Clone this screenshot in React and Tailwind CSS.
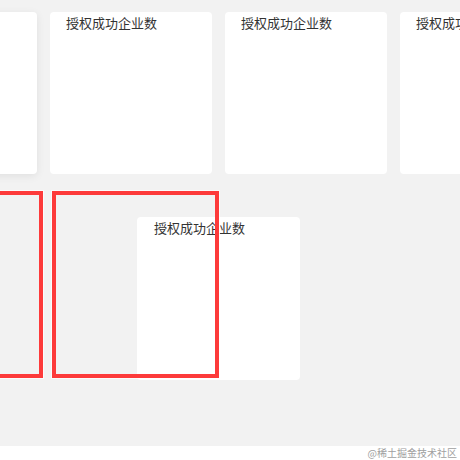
const font = { fontFamily: '"Noto Sans CJK SC", "Noto Sans", sans-serif' };

function Card({ lifted }) {
  return (
    <div
      className={`w-[162px] h-[162px] shrink-0 bg-white rounded-[4px] ${
        lifted ? "shadow-[0_2px_8px_rgba(0,0,0,0.08)]" : ""
      }`}
    >
      <p className="pl-[16px] text-[13px] leading-[20px] pt-[1px] text-[#333]">
        授权成功企业数
      </p>
    </div>
  );
}

export default function App() {
  return (
    <div className="w-[460px] h-[460px] overflow-hidden bg-white" style={font}>
      <div className="relative h-[446px] bg-[#f2f2f2] overflow-hidden">
        <div className="flex gap-[13px] ml-[-125px] pt-[12px]">
          <Card lifted />
          <Card />
          <Card />
          <Card />
        </div>

        {/* dragged card */}
        <div className="absolute left-[137px] top-[217px] w-[163px] h-[163px] bg-white rounded-[4px]">
          <p className="pl-[17px] text-[13px] leading-[20px] pt-[1px] text-[#333]">
            授权成功企业数
          </p>
        </div>

        {/* drop targets */}
        <div className="relative z-10 flex gap-[9px] ml-[-124px] mt-[17px]">
          <div className="w-[167px] h-[187px] shrink-0 border-[4px] border-[#fd3a3a] shadow-[0_0_0_1px_rgba(255,255,255,0.7)]" />
          <div className="w-[167px] h-[187px] shrink-0 border-[4px] border-[#fd3a3a] shadow-[0_0_0_1px_rgba(255,255,255,0.7)]" />
        </div>
      </div>
      <div className="h-[14px] flex justify-end pr-[3px]">
        <span className="text-[10px] leading-[14px] text-[#a0a0a0]">@稀土掘金技术社区</span>
      </div>
    </div>
  );
}
